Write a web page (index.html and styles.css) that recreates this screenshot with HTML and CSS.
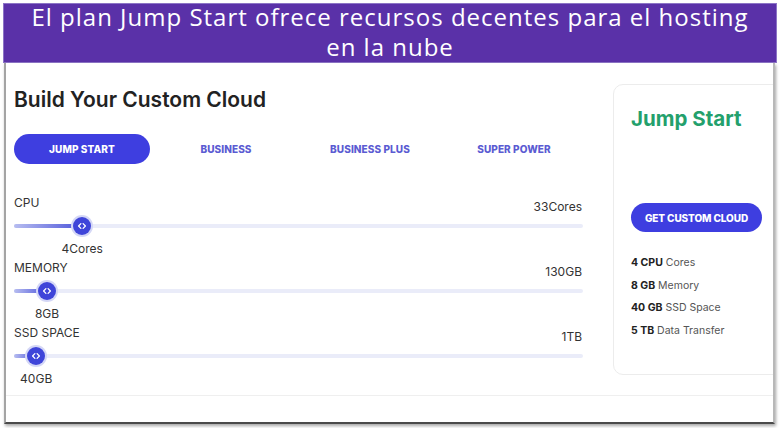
FILE: index.html
```html
<!DOCTYPE html>
<html lang="es">
<head>
<meta charset="utf-8">
<link rel="stylesheet" href="styles.css">
</head>
<body>
<div class="banner">
  <p>El plan Jump Start ofrece recursos decentes para el hosting<br>en la nube</p>
</div>
<div class="frame">
  <div class="content">
    <div class="builder">
      <h1 class="title">Build Your Custom Cloud</h1>
      <div class="tabs">
        <div class="tab active">JUMP START</div>
        <div class="tab">BUSINESS</div>
        <div class="tab">BUSINESS PLUS</div>
        <div class="tab">SUPER POWER</div>
      </div>
      <div class="sliders">
        <div class="slider">
          <div class="slider-head"><span class="label">CPU</span><span class="max">33Cores</span></div>
          <div class="track-wrap">
            <div class="track"></div>
            <div class="fill" style="width:12%"></div>
            <div class="thumb" style="left:12%"><svg viewBox="0 0 10 10" width="10" height="10"><path d="M3.9 2.6 L1.6 5 L3.9 7.4 M6.1 2.6 L8.4 5 L6.1 7.4" fill="none" stroke="#fff" stroke-width="1.3" stroke-linecap="round" stroke-linejoin="round"/></svg></div>
          </div>
          <div class="value-row"><span class="value" style="left:12%">4Cores</span></div>
        </div>
        <div class="slider">
          <div class="slider-head"><span class="label">MEMORY</span><span class="max">130GB</span></div>
          <div class="track-wrap">
            <div class="track"></div>
            <div class="fill" style="width:5.8%"></div>
            <div class="thumb" style="left:5.8%"><svg viewBox="0 0 10 10" width="10" height="10"><path d="M3.9 2.6 L1.6 5 L3.9 7.4 M6.1 2.6 L8.4 5 L6.1 7.4" fill="none" stroke="#fff" stroke-width="1.3" stroke-linecap="round" stroke-linejoin="round"/></svg></div>
          </div>
          <div class="value-row"><span class="value" style="left:5.8%">8GB</span></div>
        </div>
        <div class="slider">
          <div class="slider-head"><span class="label">SSD SPACE</span><span class="max">1TB</span></div>
          <div class="track-wrap">
            <div class="track"></div>
            <div class="fill" style="width:3.9%"></div>
            <div class="thumb" style="left:3.9%"><svg viewBox="0 0 10 10" width="10" height="10"><path d="M3.9 2.6 L1.6 5 L3.9 7.4 M6.1 2.6 L8.4 5 L6.1 7.4" fill="none" stroke="#fff" stroke-width="1.3" stroke-linecap="round" stroke-linejoin="round"/></svg></div>
          </div>
          <div class="value-row"><span class="value" style="left:3.9%">40GB</span></div>
        </div>
      </div>
    </div>
    <div class="card">
      <h2 class="plan">Jump Start</h2>
      <div class="cta">GET CUSTOM CLOUD</div>
      <ul class="features">
        <li><b>4 CPU</b> Cores</li>
        <li><b>8 GB</b> Memory</li>
        <li><b>40 GB</b> SSD Space</li>
        <li><b>5 TB</b> Data Transfer</li>
      </ul>
    </div>
  </div>
  <div class="footer-line"></div>
</div>
</body>
</html>
```
FILE: styles.css
```css
* { box-sizing: border-box; }
html, body { margin: 0; padding: 0; background: #fff; }
body { width: 780px; height: 428px; overflow: hidden; font-family: Inter, "Liberation Sans", sans-serif; }

.banner {
  margin: 3px 3px 0;
  height: 60px;
  background: #5a31a8;
  border: 1px solid #8c74c6;
  display: flex;
  align-items: center;
  justify-content: center;
}
.banner p {
  margin: 0;
  color: #fff;
  font-family: "Open Sans", Lato, sans-serif;
  font-size: 24px;
  line-height: 30px;
  text-align: center;
  letter-spacing: 1px;
  position: relative;
  top: -1px;
}

.frame {
  margin: 0 5px 0 4px;
  height: 361px;
  border-left: 2px solid #a4a4a4;
  border-right: 2px solid #b8b8b8;
  border-bottom: 2px solid #4a4a4a;
  box-shadow: 1px 2px 3px rgba(0,0,0,0.35);
  background: #fff;
  overflow: hidden;
  display: flex;
  flex-direction: column;
}
.content { display: flex; height: 332px; }
.builder { width: 577px; padding: 25px 0 0 8px; flex: none; }
.title {
  margin: 0;
  font-size: 21px;
  line-height: 24px;
  font-weight: 600;
  color: #222;
  letter-spacing: 0;
}
.tabs {
  margin-top: 22px;
  display: grid;
  grid-template-columns: repeat(4, 136px);
  column-gap: 8px;
}
.tab {
  height: 30px;
  border-radius: 15px;
  display: flex;
  align-items: center;
  justify-content: center;
  font-size: 10px;
  font-weight: 800;
  color: #5b5bd2;
  letter-spacing: 0.1px;
}
.tab.active { background: #3e3ee0; color: #fff; }

.sliders { margin-top: 32px; }
.slider { margin-bottom: 5px; }
.slider-head {
  height: 18px;
  display: flex;
  justify-content: space-between;
  font-size: 12px;
  color: #333;
  margin-right: 1px;
}
.slider-head .label { line-height: 14px; align-self: flex-start; }
.slider-head .max { line-height: 14px; align-self: flex-end; }
.track-wrap { position: relative; height: 24px; }
.track {
  position: absolute; left: 0; right: 0; top: 10px; height: 4px;
  background: #eaecf9; border-radius: 2px;
}
.fill {
  position: absolute; left: 0; top: 10px; height: 4px; border-radius: 2px;
  background: linear-gradient(90deg, #b7bdf0, #4d55da);
}
.thumb {
  position: absolute; top: 12px;
  width: 18px; height: 18px; margin: -9px 0 0 -9px;
  border-radius: 50%;
  background: #3f45d9;
  box-shadow: 0 0 0 2px #d4d7f6;
  display: flex; align-items: center; justify-content: center;
}
.thumb svg { display: block; }
.value-row { position: relative; height: 14px; margin-top: 4px; }
.value {
  position: absolute; top: 0; transform: translateX(-50%);
  font-size: 12px; line-height: 14px; color: #333; white-space: nowrap;
}

.card {
  margin: 21px 0 0 30px;
  width: 200px;
  height: 291px;
  flex: none;
  border: 1px solid #ececec;
  border-radius: 10px;
  padding: 22px 0 0 17px;
}
.plan {
  margin: 0;
  font-size: 20.5px;
  line-height: 24px;
  font-weight: 700;
  color: #23a06c;
}
.cta {
  margin-top: 72px;
  width: 131px;
  height: 29px;
  border-radius: 15px;
  background: #3e3ee0;
  color: #fff;
  font-size: 10px;
  font-weight: 800;
  display: flex; align-items: center; justify-content: center;
  letter-spacing: -0.1px;
}
.features {
  list-style: none;
  margin: 20px 0 0;
  padding: 0;
  font-size: 10.5px;
  color: #555;
}
.features li { line-height: 22.7px; }
.features b { color: #222; font-weight: 700; }

.footer-line { margin-top: 0; height: 1px; background: #efefef; }
```
